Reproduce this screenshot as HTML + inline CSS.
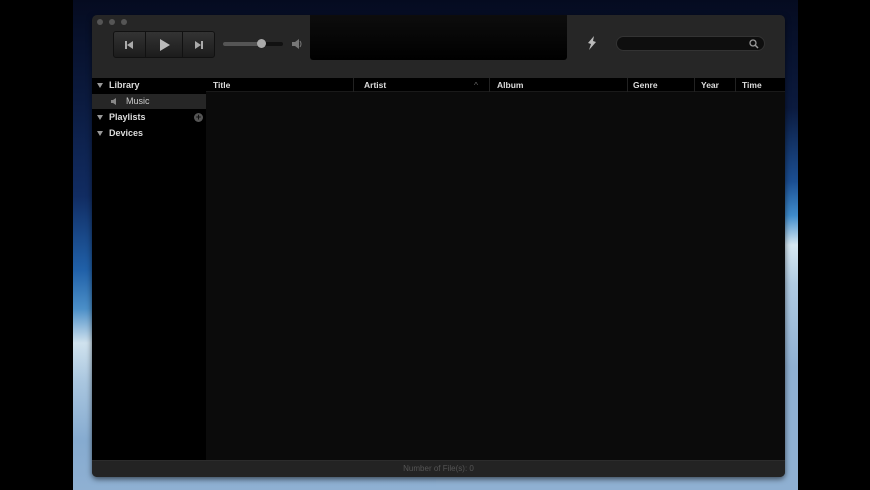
<!DOCTYPE html>
<html><head><style>
*{margin:0;padding:0;box-sizing:border-box}
body{width:870px;height:490px;background:#000;position:relative;overflow:hidden;font-family:"Liberation Sans",sans-serif}
.deskL{position:absolute;left:73px;top:0;width:363px;height:490px;background:linear-gradient(#050b20 0%,#0b1a3e 20%,#112c62 40%,#2060a8 55%,#4b8fc8 63%,#d0e2ee 70%,#a9c6df 78%,#86abd0 90%,#8fb0d2 100%)}
.deskR{position:absolute;left:436px;top:0;width:362px;height:490px;background:linear-gradient(#050b20 0%,#0b1a3e 22%,#1b4e92 37%,#3f8ccc 44%,#d6e8f2 50%,#b0cbe2 58%,#8fb0d2 75%,#8fb0d2 100%)}
.win{position:absolute;left:92px;top:15px;width:693px;height:462px;background:#262626;border-radius:5px;overflow:hidden;box-shadow:0 2px 6px rgba(0,0,0,.6)}
.tl{position:absolute;top:4px;width:6px;height:6px;border-radius:50%;background:#555}
.btns{position:absolute;left:21px;top:16px;width:102px;height:27px;border:1px solid #111;border-radius:3px;background:linear-gradient(#333,#1c1c1c);display:flex}
.btns div{flex:1;border-right:1px solid #111;display:flex;align-items:center;justify-content:center}
.btns div:nth-child(2){flex:1.2}
.btns div:last-child{border:none}
.disp{position:absolute;left:218px;top:0;width:257px;height:45px;background:linear-gradient(#0d0d0d,#000);border-radius:0 0 3px 3px}
.search{position:absolute;left:524px;top:21px;width:149px;height:15px;border-radius:8px;background:#0e0e0e;border:1px solid #333}
.side{position:absolute;left:0;top:63px;width:114px;height:382px;background:#000}
.side .it{position:absolute;color:#ddd;font-weight:bold;font-size:9px}
.tri{position:absolute;left:5px;width:0;height:0;border-left:3px solid transparent;border-right:3px solid transparent;border-top:5px solid #999}
.hdr{position:absolute;left:114px;top:63px;width:579px;height:14px;background:#000;border-bottom:1px solid #1a1a1a}
.hdr span{position:absolute;top:2px;color:#ddd;font-weight:bold;font-size:8.5px}
.hdr i{position:absolute;top:0;width:1px;height:14px;background:#222}
.content{position:absolute;left:114px;top:77px;width:579px;height:368px;background:#0b0b0b}
.status{position:absolute;left:0;top:445px;width:693px;height:17px;background:#232323;border-top:1px solid #2c2c2c;color:#555;font-size:8px;text-align:center;line-height:16px}
</style></head><body>
<div class="deskL"></div><div class="deskR"></div>
<div class="win">
<div class="tl" style="left:5px"></div><div class="tl" style="left:17px"></div><div class="tl" style="left:29px"></div>
<div class="btns">
<div><svg width="10" height="8"><rect x="1" y="0" width="2" height="8" fill="#aaa"/><path d="M9 0 L3 4 L9 8Z" fill="#aaa"/></svg></div>
<div><svg width="12" height="12"><path d="M2 0 L12 6 L2 12Z" fill="#bbb"/></svg></div>
<div><svg width="10" height="8"><path d="M1 0 L7 4 L1 8Z" fill="#aaa"/><rect x="7" y="0" width="2" height="8" fill="#aaa"/></svg></div>
</div>
<div style="position:absolute;left:131px;top:27px;width:60px;height:4px;border-radius:2px;background:#111"></div>
<div style="position:absolute;left:131px;top:27px;width:38px;height:4px;border-radius:2px;background:#555"></div>
<div style="position:absolute;left:165px;top:24px;width:9px;height:9px;border-radius:50%;background:#aaa"></div>
<svg style="position:absolute;left:200px;top:24px" width="11" height="10"><path d="M0 3h3l4-3v10l-4-3H0z" fill="#777"/><path d="M8 2q2 3 0 6" stroke="#777" fill="none"/></svg>
<div class="disp"></div>
<svg style="position:absolute;left:494px;top:21px" width="12" height="14"><path d="M8 0 L2 7 L5 8 L3 14 L10 6 L7 5Z" fill="#bbb"/></svg>
<div class="search"><svg style="position:absolute;right:5px;top:2px" width="10" height="10"><circle cx="4" cy="4" r="3" stroke="#999" stroke-width="1.3" fill="none"/><path d="M6 6l3 3" stroke="#999" stroke-width="1.5"/></svg></div>
<div class="side">
<div class="tri" style="top:5px"></div><div class="it" style="left:17px;top:2px">Library</div>
<div style="position:absolute;left:0;top:16px;width:114px;height:15px;background:#262626"></div>
<div class="it" style="left:34px;top:18px;font-weight:normal;color:#ccc">Music</div>
<svg style="position:absolute;left:19px;top:20px" width="9" height="7"><path d="M0 2h2l3-2v7l-3-2H0z" fill="#888"/></svg>
<div class="tri" style="top:37px"></div><div class="it" style="left:17px;top:34px">Playlists</div>
<div style="position:absolute;left:102px;top:35px;width:9px;height:9px;border-radius:50%;background:#555;color:#111;font-size:9px;line-height:9px;text-align:center;font-weight:bold">+</div>
<div class="tri" style="top:53px"></div><div class="it" style="left:17px;top:50px">Devices</div>
</div>
<div class="hdr">
<span style="left:7px">Title</span><i style="left:147px"></i>
<span style="left:158px">Artist</span><span style="left:268px;color:#666;font-weight:normal">^</span><i style="left:283px"></i>
<span style="left:291px">Album</span><i style="left:421px"></i>
<span style="left:427px">Genre</span><i style="left:488px"></i>
<span style="left:495px">Year</span><i style="left:529px"></i>
<span style="left:536px">Time</span>
</div>
<div class="content"></div>
<div class="status">Number of File(s): 0</div>
</div>
</body></html>
